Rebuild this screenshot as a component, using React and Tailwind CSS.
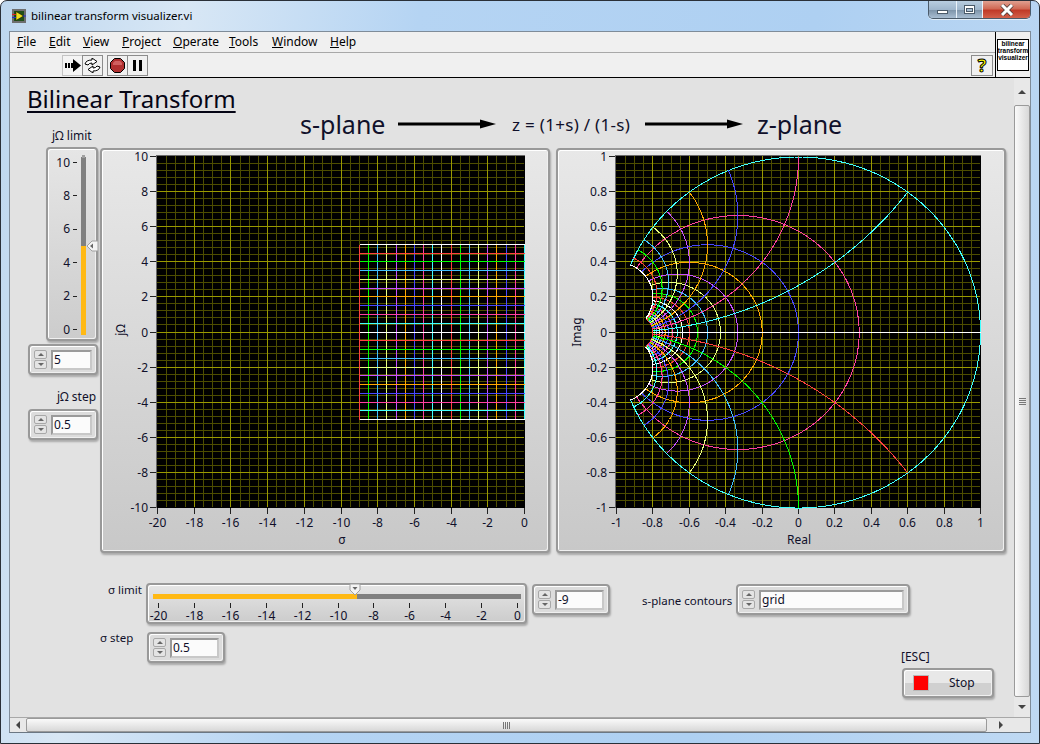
const FONT = "font-['Noto_Sans',sans-serif]";

const CYCLE = ['#ffffff', '#ff4040', '#00ff00', '#40c0ff', '#e8ff80', '#c850ff', '#ffa800', '#4848ff', '#ff40a0', '#40ffff'];
const MENUS = [
  ['F', 'ile', 'w-[32px]'], ['E', 'dit', 'w-[34px]'], ['V', 'iew', 'w-[39px]'], ['P', 'roject', 'w-[51px]'],
  ['O', 'perate', 'w-[56px]'], ['T', 'ools', 'w-[43px]'], ['W', 'indow', 'w-[58px]'], ['H', 'elp', 'w-[40px]'],
];

function range(from, to, step) {
  const out = [];
  const n = Math.round((to - from) / step);
  for (let i = 0; i <= n; i++) out.push(from + i * step);
  return out;
}

// z = (1+s) / (1-s)
function toZ(sigma, omega) {
  const d = (1 - sigma) * (1 - sigma) + omega * omega;
  return [(1 - sigma * sigma - omega * omega) / d, (2 * omega) / d];
}

const sigmas = range(-9, 0, 0.5);
const omegas = range(-5, 5, 0.5);
const vColor = (i) => CYCLE[(i + 1) % 10];
const hColor = (o) => CYCLE[Math.round((5 - o) * 2) % 10];

function Grid({ x0, x1, y0, y1, xMinor, yMinor }) {
  const xs = range(0, 10, 1).flatMap((i) => range(0, xMinor - 1, 1).map((j) => ({ major: j === 0, v: i + j / xMinor }))).filter((g) => g.v > 0 && g.v < 10);
  const ys = range(0, 10, 1).flatMap((i) => range(0, yMinor - 1, 1).map((j) => ({ major: j === 0, v: i + j / yMinor }))).filter((g) => g.v > 0 && g.v < 10);
  const sx = (v) => Math.round(x0 + ((x1 - x0) * v) / 10) + 0.5;
  const sy = (v) => Math.round(y0 + ((y1 - y0) * v) / 10) + 0.5;
  return (
    <g shapeRendering="crispEdges" strokeWidth="1">
      <rect x={x0} y={y0} width={x1 - x0 + 1} height={y1 - y0 + 1} fill="#000" />
      {xs.filter((g) => !g.major).map((g) => <line key={g.v} x1={sx(g.v)} x2={sx(g.v)} y1={y0} y2={y1} stroke="#4d4d00" />)}
      {ys.filter((g) => !g.major).map((g) => <line key={g.v} y1={sy(g.v)} y2={sy(g.v)} x1={x0} x2={x1} stroke="#4d4d00" />)}
      {xs.filter((g) => g.major).map((g) => <line key={g.v} x1={sx(g.v)} x2={sx(g.v)} y1={y0} y2={y1} stroke="#999900" />)}
      {ys.filter((g) => g.major).map((g) => <line key={g.v} y1={sy(g.v)} y2={sy(g.v)} x1={x0} x2={x1} stroke="#999900" />)}
      <path d={`M${x0 - 0.5} ${y1 + 1} V${y0 - 0.5} H${x1 + 1}`} fill="none" stroke="#6a6a6a" />
    </g>
  );
}

function Axes({ x0, x1, y0, y1, xLabels, yLabels }) {
  return (
    <g fontSize="12" fill="#10102a">
      {yLabels.map((l, i) => {
        const y = Math.round(y0 + ((y1 - y0) * i) / 10) + 0.5;
        return (
          <g key={l}>
            <line x1={x0 - 7} x2={x0 - 1} y1={y} y2={y} stroke="#222" shapeRendering="crispEdges" />
            <text x={x0 - 9} y={y + 4} textAnchor="end">{l}</text>
          </g>
        );
      })}
      {xLabels.map((l, i) => {
        const x = Math.round(x0 + ((x1 - x0) * i) / 10) + 0.5;
        return (
          <g key={l}>
            <line x1={x} x2={x} y1={y1 + 1} y2={y1 + 7} stroke="#222" shapeRendering="crispEdges" />
            <text x={x} y={y1 + 20} textAnchor="middle">{l}</text>
          </g>
        );
      })}
    </g>
  );
}

function SPlane() {
  const sx = (s) => Math.round(524 + s * 18.35) + 0.5;
  const sy = (o) => Math.round(331.5 - o * 17.55) + 0.5;
  return (
    <svg width="450" height="405" viewBox="100 148 450 405" className="block">
      <Grid x0={157} x1={524} y0={156} y1={507} xMinor={4} yMinor={5} />
      <Axes x0={157} x1={524} y0={156} y1={507}
        xLabels={range(-20, 0, 2).map(String)}
        yLabels={range(-10, 10, 2).reverse().map(String)} />
      <g shapeRendering="crispEdges" strokeWidth="1">
        {sigmas.map((s, i) => <line key={s} x1={sx(s)} x2={sx(s)} y1={sy(5)} y2={sy(-5)} stroke={vColor(i)} />)}
        {omegas.map((o) => <line key={o} x1={sx(-9)} x2={sx(0)} y1={sy(o)} y2={sy(o)} stroke={hColor(o)} />)}
      </g>
      <text x="342" y="544" fontSize="12" textAnchor="middle" fill="#10102a">σ</text>
      <text transform="translate(125 330) rotate(-90)" fontSize="12" textAnchor="middle" fill="#10102a">jΩ</text>
    </svg>
  );
}

function ZPlane() {
  const px = (z) => `${(616.5 + (z[0] + 1) * 182).toFixed(1)},${(332.5 - z[1] * 175.5).toFixed(1)}`;
  const fmt = (v) => String(Math.round(v * 10) / 10);
  return (
    <svg width="450" height="405" viewBox="556 148 450 405" className="block">
      <Grid x0={616} x1={980} y0={156} y1={507} xMinor={4} yMinor={5} />
      <Axes x0={616} x1={980} y0={156} y1={507}
        xLabels={range(-1, 1, 0.2).map(fmt)}
        yLabels={range(-1, 1, 0.2).reverse().map(fmt)} />
      <g fill="none" strokeWidth="1" shapeRendering="crispEdges">
        {sigmas.map((s, i) => (
          <polyline key={s} stroke={vColor(i)} points={range(-5, 5, 0.02).map((o) => px(toZ(s, o))).join(' ')} />
        ))}
        {omegas.map((o) => (
          <polyline key={o} stroke={hColor(o)} points={range(-9, 0, 0.02).map((s) => px(toZ(s, o))).join(' ')} />
        ))}
      </g>
      <text x="799" y="544" fontSize="12" textAnchor="middle" fill="#10102a">Real</text>
      <text transform="translate(581 332) rotate(-90)" fontSize="12" textAnchor="middle" fill="#10102a">Imag</text>
    </svg>
  );
}

function Spinner() {
  const btn = 'h-[9px] flex items-center justify-center rounded-[2px] border border-[#a8a8a8] bg-[#e4e4e4]';
  return (
    <div className="w-[13px] h-[19px] flex flex-col justify-between shrink-0">
      <div className={btn}><div className="w-0 h-0 border-x-[3px] border-x-transparent border-b-[3px] border-b-[#666]" /></div>
      <div className={btn}><div className="w-0 h-0 border-x-[3px] border-x-transparent border-t-[3px] border-t-[#666]" /></div>
    </div>
  );
}

const BOX = 'absolute rounded-[4px] border-2 border-[#999999] bg-[#dcdcdc] shadow-[inset_1px_1px_0_#fff,inset_-1px_-1px_0_#f0f0f0,1px_2px_2px_rgba(0,0,0,0.25)]';

function Numeric({ pos, value }) {
  return (
    <div className={`${BOX} ${pos} flex items-center gap-[4px] pl-[4px] pr-[4px]`}>
      <Spinner />
      <div className="flex-1 h-[20px] bg-[#fbfbfb] border-2 border-[#9a9a9a] border-b-[#c8c8c8] border-r-[#c8c8c8] pl-[1px] text-[12px] leading-[16px] text-[#10102a]">{value}</div>
    </div>
  );
}

function VSlider() {
  const labels = [10, 8, 6, 4, 2, 0];
  return (
    <svg width="52" height="194" viewBox="46 147 52 194" className="block">
      <rect x="81" y="157" width="5" height="90" fill="#808080" />
      <rect x="81" y="246" width="5" height="89" fill="#ffb914" />
      <rect x="82" y="155" width="3" height="3" fill="#a0a0a0" />
      {labels.map((l, i) => {
        const y = 162.5 + i * 33.4;
        return (
          <g key={l}>
            <line x1="73" x2="77" y1={y} y2={y} stroke="#222" shapeRendering="crispEdges" />
            <text x="70" y={y + 4} textAnchor="end" fontSize="12" fill="#10102a">{l}</text>
          </g>
        );
      })}
      <path d="M87 246 L92 241 H98 V251 H92 Z" fill="#f4f4f4" stroke="#a0a0a0" />
      <path d="M90 246 L93 243.5 V248.5 Z" fill="#666" />
    </svg>
  );
}

function HSlider() {
  return (
    <svg width="381" height="41" viewBox="146 583 381 41" className="block">
      <rect x="153" y="594" width="205" height="5" fill="#ffb914" />
      <rect x="357" y="594" width="164" height="5" fill="#808080" />
      {range(-20, 0, 2).map((v, i) => {
        const x = Math.round(158 + i * 35.9) + 0.5;
        return (
          <g key={v}>
            <line x1={x} x2={x} y1="603" y2="608" stroke="#222" shapeRendering="crispEdges" />
            <text x={x} y="620" textAnchor="middle" fontSize="12" fill="#10102a">{v}</text>
          </g>
        );
      })}
      <path d="M350 584 H360 V590 L355 595 L350 590 Z" fill="#f4f4f4" stroke="#a0a0a0" />
      <path d="M352.5 587 H357.5 L355 590 Z" fill="#666" />
    </svg>
  );
}

function Arrow() {
  return (
    <svg width="98" height="12" viewBox="0 0 98 12" className="block">
      <rect x="0" y="4.5" width="84" height="3" fill="#000" />
      <path d="M82 1.5 L98 6 L82 10.5 Z" fill="#000" />
    </svg>
  );
}

function ToolbarIcons() {
  const cell = 'w-[21px] h-[21px] flex items-center justify-center border border-[#8c8c8c]';
  return (
    <div className="flex items-center pl-[52px] h-full">
      <div className="flex">
        <div className={`${cell} bg-[#f4f4f4] border-[#c4c4c4]`}>
          <svg width="16" height="13" viewBox="0 0 16 13">
            <path d="M0 4h2v5H0zM3 4h2v5H3zM6 4h2V0l8 6.5L8 13V9H6z" fill="#000" />
          </svg>
        </div>
        <div className={`${cell} -ml-px`}>
          <svg width="17" height="15" viewBox="0 0 17 15">
            <path d="M1 6 Q2 2 8 2 V0 L13 3.5 L8 7 V5 Q5 5 4 7 Z M16 9 Q15 13 9 13 V15 L4 11.5 L9 8 V10 Q12 10 13 8 Z" fill="#fff" stroke="#000" />
          </svg>
        </div>
      </div>
      <div className="flex ml-[4px]">
        <div className={cell}>
          <svg width="15" height="15" viewBox="0 0 15 15">
            <path d="M4.5 .5h6l4 4v6l-4 4h-6l-4-4v-6z" fill="#b03030" stroke="#000" />
            <path d="M5 3h5l2 2v2H3V5z" fill="#d06060" />
          </svg>
        </div>
        <div className={`${cell} -ml-px`}>
          <div className="flex gap-[3px]">
            <div className="w-[3px] h-[11px] bg-black" />
            <div className="w-[3px] h-[11px] bg-black" />
          </div>
        </div>
      </div>
    </div>
  );
}

function WindowButtons() {
  return (
    <div className="flex h-[18px] rounded-b-[5px] overflow-hidden border border-t-0 border-[#4a5a6a] shadow-[0_1px_0_rgba(255,255,255,0.6)]">
      <div className="w-[28px] flex items-center justify-center border-r border-[#eaf2fa] bg-[linear-gradient(#b8cde0,#9fb6cc_50%,#7f95ab_55%,#a8bdd2)]">
        <div className="w-[11px] h-[4px] mt-[4px] bg-white border border-[#4a5a6a]" />
      </div>
      <div className="w-[26px] flex items-center justify-center border-r border-[#eaf2fa] bg-[linear-gradient(#b8cde0,#9fb6cc_50%,#7f95ab_55%,#a8bdd2)]">
        <div className="w-[11px] h-[9px] bg-white border border-[#4a5a6a] flex items-center justify-center">
          <div className="w-[7px] h-[4px] bg-[#a8bdd2] border border-[#4a5a6a]" />
        </div>
      </div>
      <div className="w-[47px] flex items-center justify-center bg-[linear-gradient(#e0a090,#d06a55_45%,#c03a28_55%,#d2604a)]">
        <svg width="14" height="12" viewBox="0 0 14 12">
          <path d="M2 1 L12 11 M12 1 L2 11" stroke="#4a3a38" strokeWidth="4.5" />
          <path d="M2 1 L12 11 M12 1 L2 11" stroke="#fff" strokeWidth="3" />
        </svg>
      </div>
    </div>
  );
}

function FrontPanel() {
  return (
    <div className="relative flex-1 overflow-hidden bg-[#e2e2e2] text-[#10102a]">
      <div className="absolute left-[17px] top-[3px] text-[24px] leading-[36px] underline decoration-[2px] underline-offset-[3px] text-[#050515] whitespace-nowrap">Bilinear Transform</div>
      <div className="absolute left-[290px] top-[27px] text-[25px] leading-[38px] whitespace-nowrap">s-plane</div>
      <div className="absolute left-[388px] top-[40px]"><Arrow /></div>
      <div className="absolute left-[502px] top-[35px] text-[17px] tracking-[0.3px] leading-[24px] whitespace-nowrap">z = (1+s) / (1-s)</div>
      <div className="absolute left-[635px] top-[40px]"><Arrow /></div>
      <div className="absolute left-[747px] top-[27px] text-[25px] leading-[38px] whitespace-nowrap">z-plane</div>

      <div className="absolute left-[42px] top-[50px] text-[12px] leading-[16px] whitespace-nowrap">jΩ limit</div>
      <div className={`${BOX} left-[36px] top-[69px] w-[52px] h-[194px] bg-[linear-gradient(#e6e6e6,#cccccc)]`}><div className="-m-[2px]"><VSlider /></div></div>
      <Numeric pos="left-[18px] top-[266px] w-[70px] h-[31px]" value="5" />
      <div className="absolute left-[47px] top-[311px] text-[12px] leading-[16px] whitespace-nowrap">jΩ step</div>
      <Numeric pos="left-[18px] top-[331px] w-[70px] h-[31px]" value="0.5" />

      <div className={`${BOX} left-[90px] top-[70px] w-[450px] h-[405px] bg-[linear-gradient(#e8e8e8,#c8c8c8)]`}><div className="-m-[2px]"><SPlane /></div></div>
      <div className={`${BOX} left-[546px] top-[70px] w-[450px] h-[405px] bg-[linear-gradient(#e8e8e8,#c8c8c8)]`}><div className="-m-[2px]"><ZPlane /></div></div>

      <div className="absolute left-[98px] top-[504px] text-[11.5px] leading-[16px] whitespace-nowrap">σ limit</div>
      <div className={`${BOX} left-[136px] top-[505px] w-[381px] h-[41px] bg-[linear-gradient(#e6e6e6,#cccccc)]`}><div className="-m-[2px]"><HSlider /></div></div>
      <Numeric pos="left-[522px] top-[506px] w-[78px] h-[31px]" value="-9" />
      <div className="absolute left-[632px] top-[515px] text-[11.5px] leading-[16px] whitespace-nowrap">s-plane contours</div>
      <Numeric pos="left-[726px] top-[506px] w-[174px] h-[31px]" value="grid" />
      <div className="absolute left-[90px] top-[552px] text-[11.5px] leading-[16px] whitespace-nowrap">σ step</div>
      <Numeric pos="left-[137px] top-[554px] w-[78px] h-[31px]" value="0.5" />

      <div className="absolute left-[891px] top-[571px] text-[12px] leading-[16px] whitespace-nowrap">[ESC]</div>
      <div className={`${BOX} left-[892px] top-[590px] w-[92px] h-[30px] bg-[linear-gradient(#e8e8e8_50%,#d0d0d0_50%)] flex items-center pl-[9px]`}>
        <div className="w-[16px] h-[16px] bg-[#ff0000] border border-[#b8b8b8]" />
        <div className="ml-[20px] text-[12px]">Stop</div>
      </div>
    </div>
  );
}

export default function App() {
  return (
    <div className={`w-[1040px] h-[744px] flex flex-col border border-[#2a3038] rounded-t-[7px] overflow-hidden ${FONT} bg-[linear-gradient(100deg,#bcd6ee_0%,#d8e7f5_16%,#b5d4f3_36%,#aed0f2_70%,#bfd9f3_100%)] text-[#10102a]`}>
      <div className="h-[30px] shrink-0 flex items-start justify-between pl-[11px] pr-[8px]">
        <div className="flex items-center h-[30px] gap-[5px]">
          <svg width="14" height="14" viewBox="0 0 14 14" className="block">
            <rect width="14" height="14" fill="#6e6e6e" />
            <rect x="2" y="2" width="10" height="10" fill="#20501a" />
            <path d="M4 2.5 L11.5 7 L4 11.5 Z" fill="#f0e020" stroke="#000" strokeWidth="0.5" />
            <path d="M0 5.5 H4" stroke="#e02020" />
            <path d="M0 8.5 H4 M11 7 H14" stroke="#2030d0" />
          </svg>
          <span className="text-[11.5px] text-black whitespace-nowrap">bilinear transform visualizer.vi</span>
        </div>
        <WindowButtons />
      </div>

      <div className="mx-[8px] flex-1 flex flex-col min-h-0 border border-[#7f8c99] border-b-[#6b7783]">
        <div className="flex h-[46px] shrink-0 bg-[#f0f0f0] border-b border-black">
          <div className="flex-1 flex flex-col">
            <div className="h-[21px] flex items-center pl-[7px] border-b border-[#a8a8a8] text-[12px] text-black">
              {MENUS.map(([k, rest, w]) => (
                <div key={k} className={`${w} whitespace-nowrap`}><span className="underline">{k}</span>{rest}</div>
              ))}
            </div>
            <div className="flex-1 flex items-center justify-between pr-[2px]">
              <ToolbarIcons />
              <div className="w-[22px] h-[21px] border border-[#8c8c8c] flex items-center justify-center text-[18px] font-bold text-[#ffff00] [-webkit-text-stroke:1px_black] leading-none">?</div>
            </div>
          </div>
          <div className="w-[35px] border-l border-black flex items-center justify-center">
            <div className="w-[32px] h-[32px] bg-white border border-black flex flex-col items-center justify-start font-['Liberation_Sans',sans-serif] font-bold text-[6.5px] leading-[7px] text-black overflow-hidden">
              <span>bilinear</span>
              <span>transform</span>
              <span>visualizer</span>
            </div>
          </div>
        </div>

        <div className="flex-1 flex min-h-0">
          <FrontPanel />
          <div className="w-[16px] bg-[#e8e8e8] flex flex-col items-center shrink-0">
            <div className="h-[27px] flex items-center justify-center">
              <div className="w-0 h-0 border-x-[4px] border-x-transparent border-b-[4px] border-b-[#444]" />
            </div>
            <div className="w-full flex-1 flex items-center justify-center rounded-[2px] border border-[#9a9a9a] bg-[linear-gradient(90deg,#fafafa,#d8d8d8)]">
              <div className="w-[7px] h-[7px] border-y-[3px] border-double border-[#777]" />
            </div>
            <div className="h-[20px] flex items-center justify-center">
              <div className="w-0 h-0 border-x-[4px] border-x-transparent border-t-[4px] border-t-[#444]" />
            </div>
          </div>
        </div>

        <div className="h-[15px] shrink-0 flex items-center bg-[#e8e8e8] border-t border-[#a8a8a8]">
          <div className="w-[16px] flex items-center justify-center">
            <div className="w-0 h-0 border-y-[4px] border-y-transparent border-r-[4px] border-r-[#444]" />
          </div>
          <div className="w-[961px] h-full flex items-center justify-center rounded-[2px] border border-[#9a9a9a] bg-[linear-gradient(#fafafa,#d8d8d8)]">
            <div className="w-[7px] h-[7px] border-x-[3px] border-double border-[#777]" />
          </div>
          <div className="w-[27px] flex items-center justify-center">
            <div className="w-0 h-0 border-y-[4px] border-y-transparent border-l-[4px] border-l-[#444]" />
          </div>
        </div>
      </div>
      <div className="h-[10px] shrink-0" />
    </div>
  );
}
